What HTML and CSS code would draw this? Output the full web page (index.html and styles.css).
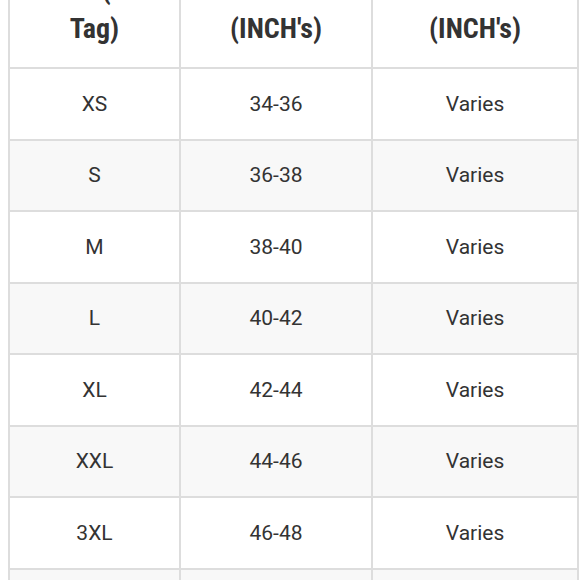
FILE: index.html
```html
<!DOCTYPE html>
<html>
<head>
<meta charset="utf-8">
<link rel="stylesheet" href="styles.css">
</head>
<body>
<table class="size-table">
  <colgroup>
    <col class="c1"><col class="c2"><col class="c3">
  </colgroup>
  <thead>
    <tr class="head-row">
      <th>Size (On<br>Tag)</th>
      <th>Chest<br>(INCH's)</th>
      <th>Waist<br>(INCH's)</th>
    </tr>
  </thead>
  <tbody>
    <tr><td>XS</td><td>34-36</td><td>Varies</td></tr>
    <tr class="alt"><td>S</td><td>36-38</td><td>Varies</td></tr>
    <tr><td>M</td><td>38-40</td><td>Varies</td></tr>
    <tr class="alt"><td>L</td><td>40-42</td><td>Varies</td></tr>
    <tr><td>XL</td><td>42-44</td><td>Varies</td></tr>
    <tr class="alt"><td>XXL</td><td>44-46</td><td>Varies</td></tr>
    <tr><td>3XL</td><td>46-48</td><td>Varies</td></tr>
    <tr class="alt"><td>4XL</td><td>48-50</td><td>Varies</td></tr>
  </tbody>
</table>
</body>
</html>
```
FILE: styles.css
```css
html, body {
  background: #ffffff;
}
body {
  margin: 0 0 0 8px;
  overflow: hidden;
  font-family: Roboto, "Noto Sans", sans-serif;
  color: #333333;
}
.size-table {
  margin-top: -51px;
  border-collapse: collapse;
  table-layout: fixed;
  width: 571px;
}
.c1 { width: 171px; }
.c2 { width: 192px; }
.c3 { width: 206px; }
.size-table th,
.size-table td {
  border: 2px solid #dddddd;
  text-align: center;
  vertical-align: middle;
}
.size-table th {
  font-family: "Roboto Condensed", "Liberation Sans Narrow", Roboto, sans-serif;
  font-weight: 700;
  font-size: 28px;
  line-height: 39px;
  padding: 19px 12px;
  color: #333333;
}
.size-table td {
  font-size: 21px;
  height: 69.5px;
  padding: 0 10px;
  color: #333333;
}
.size-table tr.alt td {
  background: #f8f8f8;
}
```
